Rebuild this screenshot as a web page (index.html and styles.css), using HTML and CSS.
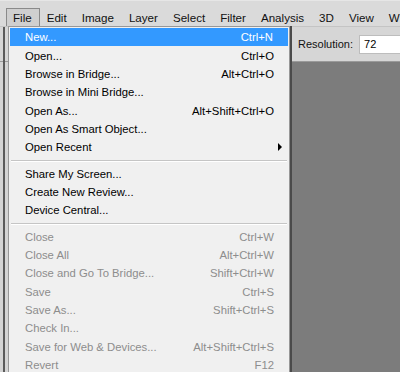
FILE: index.html
```html
<!DOCTYPE html>
<html lang="en">
<head>
  <meta charset="UTF-8" />
  <title>File menu</title>
  <link rel="stylesheet" href="styles.css">
</head>
<body>
  <div class="menubar">
    <span class="top-item active">File</span>
    <span class="top-item">Edit</span>
    <span class="top-item">Image</span>
    <span class="top-item">Layer</span>
    <span class="top-item">Select</span>
    <span class="top-item">Filter</span>
    <span class="top-item">Analysis</span>
    <span class="top-item">3D</span>
    <span class="top-item">View</span>
    <span class="top-item">Window</span>
  </div>

  <div class="workspace">
    <div class="options">
      <div class="options-left"></div>
      <div class="options-main">
        <span class="res-label">Resolution:</span>
        <span class="res-input">72</span>
      </div>
    </div>
    <div class="stage">
      <div class="tools"></div>
      <div class="canvas"></div>
    </div>

    <div class="menu">
      <div class="item hl"><span>New...</span><span>Ctrl+N</span></div>
      <div class="item"><span>Open...</span><span>Ctrl+O</span></div>
      <div class="item"><span>Browse in Bridge...</span><span>Alt+Ctrl+O</span></div>
      <div class="item"><span>Browse in Mini Bridge...</span><span></span></div>
      <div class="item"><span>Open As...</span><span>Alt+Shift+Ctrl+O</span></div>
      <div class="item"><span>Open As Smart Object...</span><span></span></div>
      <div class="item"><span>Open Recent</span><span class="arrow"></span></div>
      <div class="sep"></div>
      <div class="item"><span>Share My Screen...</span><span></span></div>
      <div class="item"><span>Create New Review...</span><span></span></div>
      <div class="item"><span>Device Central...</span><span></span></div>
      <div class="sep"></div>
      <div class="item off"><span>Close</span><span>Ctrl+W</span></div>
      <div class="item off"><span>Close All</span><span>Alt+Ctrl+W</span></div>
      <div class="item off"><span>Close and Go To Bridge...</span><span>Shift+Ctrl+W</span></div>
      <div class="item off"><span>Save</span><span>Ctrl+S</span></div>
      <div class="item off"><span>Save As...</span><span>Shift+Ctrl+S</span></div>
      <div class="item off"><span>Check In...</span><span></span></div>
      <div class="item off"><span>Save for Web &amp; Devices...</span><span>Alt+Shift+Ctrl+S</span></div>
      <div class="item off"><span>Revert</span><span>F12</span></div>
    </div>
  </div>
</body>
</html>
```

FILE: styles.css
```css
body {
  margin: 0;
  width: 400px;
  height: 372px;
  overflow: hidden;
  font-family: "Liberation Sans", sans-serif;
  font-size: 11.3px;
  background: #7c7c7c;
}
.menubar {
  display: flex;
  height: 27px;
  align-items: flex-end;
  padding-left: 6px;
  background: #dadada;
  border-top: 1px solid #e6e6e6;
  border-bottom: 1px solid #c4c4c4;
  box-sizing: border-box;
  white-space: nowrap;
  font-size: 11.6px;
}
.top-item {
  padding: 2px 7px 2px 6px;
  color: #111;
  border: 1px solid transparent;
  border-bottom: none;
}
.top-item.active {
  background: #cfcfcf;
  border-color: #8a8a8a;
}
.workspace {
  position: relative;
  height: 345px;
  display: flex;
  flex-direction: column;
}
.options {
  display: flex;
  height: 34px;
  background: #d6d6d6;
  border-bottom: 1px solid #9a9a9a;
}
.options-left {
  width: 292px;
}
.options-main {
  display: flex;
  align-items: center;
  padding-left: 6px;
  gap: 6px;
  flex: 1;
}
.res-label {
  color: #111;
  font-size: 11px;
}
.res-input {
  flex: 1;
  height: 17px;
  line-height: 17px;
  background: #fff;
  border: 1px solid #bdbdbd;
  border-right: none;
  padding-left: 4px;
  font-size: 11px;
}
.stage {
  display: flex;
  flex: 1;
}
.tools {
  width: 8px;
  background: #d4d4d4;
}
.canvas {
  flex: 1;
  background: #7c7c7c;
}
.workspace::before {
  content: "";
  position: absolute;
  left: 3px;
  top: 0;
  bottom: 0;
  width: 2px;
  background: #5a5a5a;
}
.menu {
  position: absolute;
  left: 8px;
  top: -1px;
  width: 282px;
  height: 360px;
  background: #f0f0f0;
  border: 1px solid #979797;
  box-sizing: border-box;
  box-shadow: 2px 0 0 #4a4a4a;
  padding: 1px 0 0 1px;
}
.item {
  display: flex;
  justify-content: space-between;
  align-items: center;
  height: 18.35px;
  padding: 0 15px 0 15px;
  color: #000;
  white-space: nowrap;
}
.item.hl {
  background: #3399ff;
  color: #fff;
  margin-right: 1px;
}
.item.off {
  color: #8d8d8d;
}
.arrow {
  width: 0;
  height: 0;
  border-left: 4px solid #000;
  border-top: 4px solid transparent;
  border-bottom: 4px solid transparent;
  margin-right: -8px;
}
.sep {
  height: 1px;
  margin: 4px 2px 2px 1px;
  background: #c5c5c5;
  border-bottom: 1px solid #fff;
}
```
